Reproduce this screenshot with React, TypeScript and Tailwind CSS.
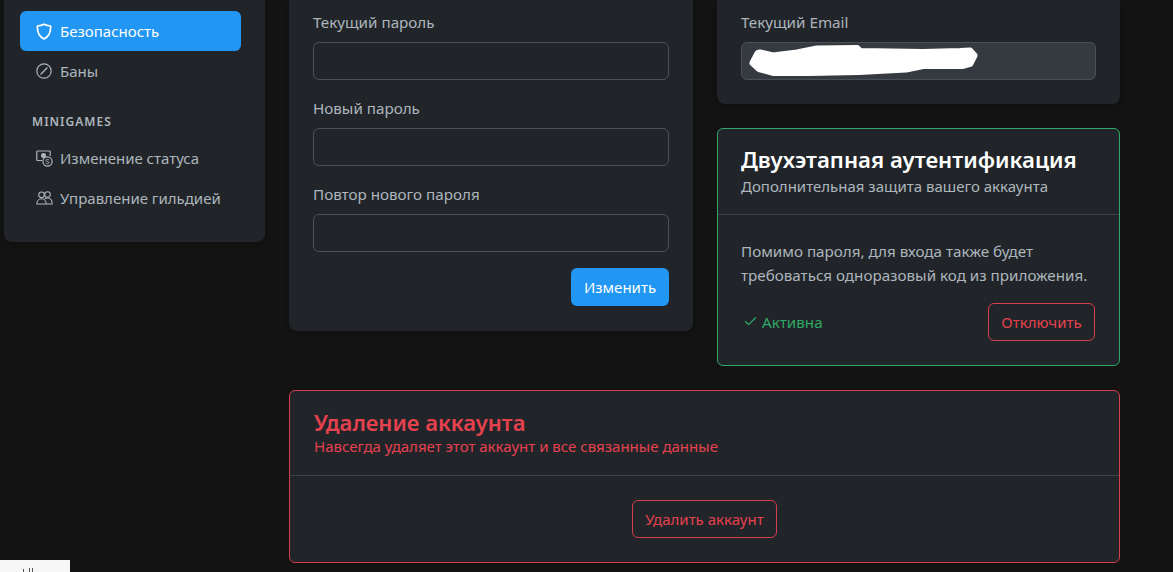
import { Check } from "lucide-react";

const font = { fontFamily: '"Noto Sans", "Open Sans", sans-serif' };

const ShieldIcon = () => (
  <svg width="16" height="17" viewBox="0 0 16 17" fill="none" stroke="currentColor" strokeWidth="1.7" strokeLinejoin="round" className="shrink-0">
    <path d="M8 1.2c2 1.100 4.200 1.600 6.600 1.800.3 5.500-1.300 10.500-6.600 13-5.300-2.500-6.900-7.500-6.600-13C3.800 2.800 6 2.300 8 1.200z" />
  </svg>
);

const BanIcon = () => (
  <svg width="16" height="16" viewBox="0 0 16 16" fill="none" stroke="currentColor" strokeWidth="1.2" strokeLinecap="round" className="shrink-0">
    <circle cx="8" cy="8" r="7.2" />
    <path d="M5 11 11 5" strokeWidth="1.4" />
  </svg>
);

const StatusIcon = () => (
  <svg width="17" height="17" viewBox="0 0 17 17" fill="none" stroke="currentColor" strokeWidth="1.2" className="shrink-0">
    <path d="M6 10.500H1.500a.7.7 0 0 1-.7-.7V1.700a.7.7 0 0 1 .7-.7h12a.7.7 0 0 1 .7.7V6" />
    <circle cx="7.500" cy="5.500" r="1.900" fill="currentColor" />
    <circle cx="11.500" cy="11.500" r="4.600" />
    <path d="M13 9.900c-.6-.6-3-.7-3 .6 0 1.400 3 .6 3 2 0 1.300-2.600 1.200-3.200.5" strokeWidth="0.9" />
  </svg>
);

const UsersIcon = () => (
  <svg width="17" height="14" viewBox="0 0 17 14" fill="none" stroke="currentColor" strokeWidth="1.1" strokeLinejoin="round" className="shrink-0">
    <circle cx="5.500" cy="3.800" r="2.800" />
    <circle cx="11.500" cy="3.500" r="2.800" />
    <path d="M.8 13c0-3 2-5.200 4.700-5.200S10.200 10 10.200 13z" />
    <path d="M8.500 7.700c.8-.5 1.800-.7 3-.7 2.800 0 4.700 2.400 4.700 6h-6" />
  </svg>
);

const Field = ({ label }: { label: string }) => (
  <div className="flex flex-col">
    <label className="mb-[10px] mt-[-2px] text-[15.2px] leading-5 text-[#adb5bd]">{label}</label>
    <input className="h-[38px] w-full rounded-md border border-[#495057] bg-transparent" />
  </div>
);

const NavItem = ({ icon, label, active }: { icon: React.ReactNode; label: string; active?: boolean }) => (
  <div className={`flex h-10 items-center gap-2 rounded-md pl-4 text-[15px] ${active ? "bg-[#2196f3] text-white" : "text-[#adb5bd]"}`}>
    <span className="flex w-4 justify-center">{icon}</span>
    <span>{label}</span>
  </div>
);

export default function App() {
  return (
    <div style={font} className="relative flex h-[572px] w-[1173px] items-start gap-6 overflow-hidden bg-[#131313] pl-1">
      {/* Sidebar */}
      <aside className="w-[261px] shrink-0 rounded-b-lg bg-[#212529] pb-6 pl-4 pr-6 pt-[11px] shadow-md">
        <NavItem active icon={<ShieldIcon />} label="Безопасность" />
        <NavItem icon={<BanIcon />} label="Баны" />
        <div className="mb-[6px] mt-[21px] flex h-5 items-center pl-3 text-xs font-semibold tracking-[1px] text-[#adb5bd]">MINIGAMES</div>
        <NavItem icon={<StatusIcon />} label="Изменение статуса" />
        <NavItem icon={<UsersIcon />} label="Управление гильдией" />
      </aside>

      {/* Content */}
      <main className="flex w-[831px] shrink-0 flex-col gap-6">
        <div className="flex items-start gap-6">
          {/* Смена пароля */}
          <section className="flex w-[404px] flex-col gap-5 rounded-b-lg bg-[#212529] px-6 pb-[25px] pt-[14px] shadow-md">
            <Field label="Текущий пароль" />
            <Field label="Новый пароль" />
            <Field label="Повтор нового пароля" />
            <div className="-mt-1 flex justify-end">
              <button className="h-[38px] w-[98px] rounded-md bg-[#2196f3] text-[15px] text-white">Изменить</button>
            </div>
          </section>

          <div className="flex w-[403px] flex-col gap-6">
            {/* Email */}
            <section className="rounded-b-lg bg-[#212529] px-6 pb-6 pt-[14px] shadow-md">
              <label className="mb-[10px] mt-[-2px] block text-[15.2px] leading-5 text-[#adb5bd]">Текущий Email</label>
              <div className="relative h-[38px] rounded-md border border-[#495057] bg-[#343a40]">
                <svg width="240" height="38" viewBox="0 0 240 38" className="absolute -left-px -top-px">
                  <path
                    d="M12 21 17 11.500l2-.5 13 3 24-3 20-4 40-.5 3 3 63 1 37-1 10-.5 4 4.500-4 8-7 2h-40l-17 3.500-47 2.500-50 1H33l-15-4z"
                    fill="#fff"
                    stroke="#fff"
                    strokeWidth="7"
                    strokeLinejoin="round"
                  />
                </svg>
              </div>
            </section>

            {/* Двухэтапная */}
            <section className="h-[238px] rounded-md border border-[#2fa866] bg-[#212529]">
              <div className="h-[86px] border-b border-[#3d4248] px-[23px] pt-[14px]">
                <h2 className="text-[22.200px] font-semibold leading-[33px] text-white">Двухэтапная аутентификация</h2>
                <p className="text-[15px] leading-5 text-[#adb5bd]">Дополнительная защита вашего аккаунта</p>
              </div>
              <div className="px-[23px] pt-[24px]">
                <p className="text-[15.2px] leading-6 text-[#adb5bd]">
                  Помимо пароля, для входа также будет
                  <br />
                  требоваться одноразовый код из приложения.
                </p>
                <div className="mt-[16px] flex items-center justify-between pl-[2px] pr-px">
                  <span className="flex items-center gap-1 text-[15.2px] text-[#2fa866]">
                    <Check size={15} strokeWidth={2} />
                    Активна
                  </span>
                  <button className="h-[38px] w-[107px] rounded-md border border-[#d63d4d] text-[15px] text-[#e5414f]">Отключить</button>
                </div>
              </div>
            </section>
          </div>
        </div>

        {/* Удаление аккаунта */}
        <section className="h-[173px] rounded-md border border-[#d63d4d] bg-[#212529]">
          <div className="h-[85px] border-b border-[#3d4248] px-6 pt-[17px]">
            <h2 className="text-[22px] font-semibold leading-[28px] text-[#e5414f]">Удаление аккаунта</h2>
            <p className="text-[15px] leading-5 text-[#e5414f]">Навсегда удаляет этот аккаунт и все связанные данные</p>
          </div>
          <div className="flex justify-center pt-6">
            <button className="h-[38px] w-[145px] rounded-md border border-[#d63d4d] text-[15px] text-[#e5414f]">Удалить аккаунт</button>
          </div>
        </section>
      </main>

      {/* Обрезанное всплывающее окно внизу слева */}
      <div className="absolute bottom-0 left-0 h-3 w-[70px] overflow-hidden bg-[#f6f6f6]">
        <span className="absolute left-[23px] top-[9px] h-[3px] w-px bg-[#555]" />
        <span className="absolute left-[29px] top-[8px] h-[4px] w-px bg-[#555]" />
        <span className="absolute left-[32px] top-[8px] h-[4px] w-px bg-[#555]" />
      </div>
    </div>
  );
}
